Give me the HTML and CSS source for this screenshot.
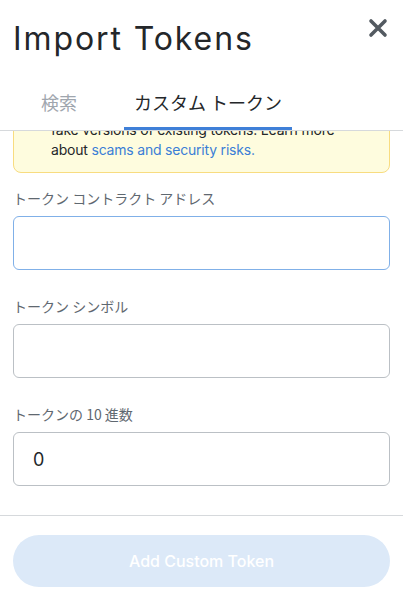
FILE: index.html
```html
<!DOCTYPE html>
<html lang="ja">
<head>
<meta charset="utf-8">
<title>Import Tokens</title>
<link rel="stylesheet" href="styles.css">
</head>
<body>
<div class="page">
  <header class="header">
    <h1 class="title">Import Tokens</h1>
    <button class="close" aria-label="close">
      <svg width="20" height="20" viewBox="0 0 20 20"><path d="M3 3 L17 17 M17 3 L3 17" stroke="#535a61" stroke-width="3.6" stroke-linecap="round"/></svg>
    </button>
  </header>
  <nav class="tabs">
    <div class="tab">検索</div>
    <div class="tab tab-active">カスタム トークン</div>
  </nav>
  <main class="scroll">
    <div class="warning">
      Anyone can create a token, including creating<br>
      fake versions of existing tokens. Learn more<br>
      about <a class="link">scams and security risks.</a>
    </div>
    <label class="label">トークン コントラクト アドレス</label>
    <div class="input input-focus"></div>
    <label class="label">トークン シンボル</label>
    <div class="input"></div>
    <label class="label">トークンの 10 進数</label>
    <div class="input"><span class="value">0</span></div>
  </main>
  <footer class="footer">
    <button class="btn">Add Custom Token</button>
  </footer>
</div>
</body>
</html>
```
FILE: styles.css
```css
* { box-sizing: border-box; }
html, body { margin: 0; padding: 0; background: #fff; }
body {
  font-family: "Inter", "Noto Sans CJK JP", sans-serif;
  color: #24272a;
}
.page {
  width: 403px;
  height: 600px;
  display: flex;
  flex-direction: column;
  overflow: hidden;
}
.header {
  display: flex;
  justify-content: space-between;
  align-items: flex-start;
  padding: 16px 14px 0 13px;
}
.title {
  margin: 0;
  font-size: 32px;
  font-weight: 400;
  line-height: 46px;
  letter-spacing: 1.9px;
}
.close {
  border: 0;
  background: none;
  padding: 0;
  margin-top: 1px;
  width: 22px;
  height: 22px;
  display: flex;
  align-items: center;
  justify-content: center;
}
.tabs {
  display: flex;
  padding: 27px 0 0 31px;
  gap: 37px;
  border-bottom: 1px solid #d6d9dc;
}
.tab {
  font-family: "Noto Sans CJK JP", sans-serif;
  font-size: 18px;
  line-height: 26px;
  padding: 0 10px 12px;
  color: #9fa6ae;
  border-bottom: 3px solid transparent;
}
.tab-active {
  color: #24272a;
  border-bottom-color: #3f80d8;
}
.scroll {
  flex: 1;
  overflow: hidden;
  padding: 0 13px;
  display: flex;
  flex-direction: column;
}
.warning {
  flex: none;
  margin-top: -44px;
  background: #fefcde;
  border: 1px solid #f8dc80;
  border-radius: 8px;
  padding: 12px 10px 12px 37px;
  font-size: 14px;
  line-height: 20px;
  letter-spacing: -0.2px;
  color: #24272a;
}
.link { color: #3b7ed6; }
.label {
  font-family: "Noto Sans CJK JP", sans-serif;
  font-size: 14px;
  line-height: 20px;
  color: #5f6870;
  margin-top: 15px;
  margin-bottom: 8px;
}
.input + .label { margin-top: 26px; }
.input {
  flex: none;
  height: 54px;
  border: 1px solid #bbc0c5;
  border-radius: 6px;
  display: flex;
  align-items: center;
  padding: 0 19px;
}
.input-focus { border-color: #80b0e8; border-width: 1.5px; }
.value { font-size: 18px; color: #24272a; }
.footer {
  border-top: 1px solid #d6d9dc;
  padding: 19px 13px 13px;
}
.btn {
  width: 100%;
  height: 52px;
  border: 0;
  border-radius: 26px;
  background: #dce9f8;
  color: #fff;
  font-family: "Inter", sans-serif;
  font-size: 16px;
  font-weight: 500;
}
```
